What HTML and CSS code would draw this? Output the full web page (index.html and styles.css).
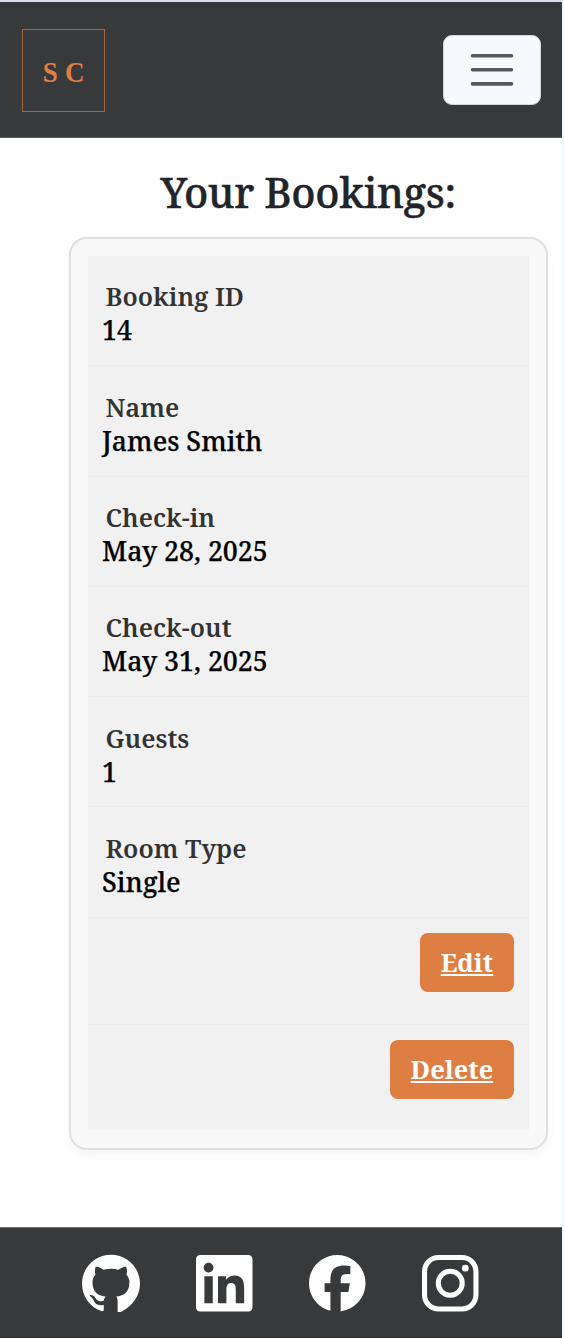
FILE: index.html
```html
<!DOCTYPE html>
<html lang="en">
<head>
<meta charset="utf-8">
<title>Your Bookings</title>
<link rel="stylesheet" href="styles.css">
</head>
<body>
<div class="page">
  <header class="navbar">
    <a class="logo"><span>S</span><span>C</span></a>
    <button class="toggler" aria-label="Menu">
      <svg width="44" height="34" viewBox="0 0 44 34"><path d="M2.5 2.7h39M2.5 16.8h39M2.5 30.9h39" stroke="#57585b" stroke-width="3.6" stroke-linecap="round"/></svg>
    </button>
  </header>
  <main class="content">
    <h1 class="title">Your Bookings:</h1>
    <section class="card">
      <dl class="rows">
        <div class="row"><dt>Booking ID</dt><dd>14</dd></div>
        <div class="row"><dt>Name</dt><dd>James Smith</dd></div>
        <div class="row"><dt>Check-in</dt><dd>May 28, 2025</dd></div>
        <div class="row"><dt>Check-out</dt><dd>May 31, 2025</dd></div>
        <div class="row"><dt>Guests</dt><dd>1</dd></div>
        <div class="row"><dt>Room Type</dt><dd>Single</dd></div>
        <div class="row action"><a class="btn edit">Edit</a></div>
        <div class="row action last"><a class="btn delete">Delete</a></div>
      </dl>
    </section>
  </main>
  <footer class="footer">
    <svg class="icon github" viewBox="0 0 24 24"><path d="M12 .297c-6.63 0-12 5.373-12 12 0 5.303 3.438 9.8 8.205 11.385.6.113.82-.258.82-.577 0-.285-.01-1.04-.015-2.04-3.338.724-4.042-1.61-4.042-1.61C4.422 18.07 3.633 17.7 3.633 17.7c-1.087-.744.084-.729.084-.729 1.205.084 1.838 1.236 1.838 1.236 1.07 1.835 2.809 1.305 3.495.998.108-.776.417-1.305.76-1.605-2.665-.3-5.466-1.332-5.466-5.93 0-1.31.465-2.38 1.235-3.22-.135-.303-.54-1.523.105-3.176 0 0 1.005-.322 3.3 1.23.96-.267 1.98-.399 3-.405 1.02.006 2.04.138 3 .405 2.28-1.552 3.285-1.23 3.285-1.23.645 1.653.24 2.873.12 3.176.765.84 1.23 1.91 1.23 3.22 0 4.61-2.805 5.625-5.475 5.92.42.36.6 1.096.6 2.22v4.1c0 .3.1.5.3.6C20.565 22.092 24 17.592 24 12.297c0-6.627-5.373-12-12-12"/></svg>
    <svg class="icon" viewBox="0 0 24 24"><path d="M20.447 20.452h-3.554v-5.569c0-1.328-.027-3.037-1.852-3.037-1.853 0-2.136 1.445-2.136 2.939v5.667H9.351V9h3.414v1.561h.046c.477-.9 1.637-1.85 3.37-1.85 3.601 0 4.267 2.37 4.267 5.455v6.286zM5.337 7.433c-1.144 0-2.063-.926-2.063-2.065 0-1.138.92-2.063 2.063-2.063 1.14 0 2.064.925 2.064 2.063 0 1.139-.925 2.065-2.064 2.065zm1.782 13.019H3.555V9h3.564v11.452zM22.225 0H1.771C.792 0 0 .774 0 1.729v20.542C0 23.227.792 24 1.771 24h20.451C23.2 24 24 23.227 24 22.271V1.729C24 .774 23.2 0 22.222 0h.003z"/></svg>
    <svg class="icon" viewBox="0 0 24 24"><path d="M9.101 23.691v-7.98H6.627v-3.667h2.474v-1.58c0-4.085 1.848-5.978 5.858-5.978.401 0 .955.042 1.468.103a8.68 8.68 0 0 1 1.141.195v3.325a8.623 8.623 0 0 0-.653-.036 26.805 26.805 0 0 0-.733-.009c-.707 0-1.259.096-1.675.309a1.686 1.686 0 0 0-.679.622c-.258.42-.374.995-.374 1.752v1.297h3.919l-.386 2.103-.287 1.564h-3.246v8.245C19.396 23.238 24 18.179 24 12.044c0-6.627-5.373-12-12-12s-12 5.373-12 12c0 5.628 3.874 10.35 9.101 11.647Z"/></svg>
    <svg class="icon" viewBox="0 0 24 24"><g fill="none" stroke="#fff" stroke-width="2.16"><rect x="1.08" y="1.08" width="21.84" height="21.84" rx="5.9"/><circle cx="12" cy="12" r="5.08"/></g><circle cx="18.41" cy="5.59" r="1.44"/></svg>
  </footer>
</div>
</body>
</html>
```
FILE: styles.css
```css
* { box-sizing: border-box; }
body {
  margin: 0;
  background: #fff;
  font-family: "Noto Serif", "Droid Serif", "DejaVu Serif Condensed", "DejaVu Serif", serif;
}
.page {
  display: flex;
  flex-direction: column;
  height: 1338px;
  border-top: 2px solid #d9dfea;
  border-right: 2px solid #f6f7fd;
}
.navbar {
  height: 136px;
  padding: 0 21px 0 22px;
  display: flex;
  align-items: center;
  justify-content: space-between;
  background: #38393b;
  border-bottom: 1px solid #5d5e62;
}
.logo {
  width: 83px;
  height: 83px;
  margin-top: 2px;
  padding-top: 3px;
  border: 1px solid #a5643f;
  display: flex;
  align-items: center;
  justify-content: center;
  gap: 5px;
  color: #e07f44;
  font: bold 30px/1 "Liberation Serif", serif;
}
.logo span { transform: scaleX(.9); }
.toggler {
  width: 98px;
  height: 70px;
  padding: 0;
  display: flex;
  align-items: center;
  justify-content: center;
  border: 1px solid #d3d5d6;
  border-radius: 9px;
  background: #f8f9fc;
}
.content {
  flex: 1;
  padding: 30px 14px 0 68.5px;
}
.title {
  margin: 0;
  height: 69px;
  line-height: 49px;
  text-align: center;
  color: #212529;
  font-size: 41.5px;
  letter-spacing: -0.4px;
  font-weight: 500;
  -webkit-text-stroke: .4px #212529;
}
.card {
  padding: 17px 17.5px 18px 17.5px;
  border: 2px solid #dedfe0;
  border-radius: 18px;
  background: #f9f9f9;
  box-shadow: 0 4px 10px rgba(0, 0, 0, .05);
  height: 912.5px;
}
.rows { margin: 0; background: #f1f1f1; height: 874px; }
.row {
  height: 110.3px;
  padding: 23.4px 14px 0;
  border-bottom: 1px solid #ececec;
}
.row dt {
  padding-left: 3.5px;
  height: 34px;
  line-height: 34px;
  font-size: 25.5px;
  font-weight: 600;
  color: #333;
}
.row dd {
  margin: 0;
  height: 34px;
  line-height: 34px;
  font-size: 26.7px;
  font-weight: 500;
  color: #000;
  -webkit-text-stroke: .25px #000;
}
.row.action {
  height: 106.8px;
  padding: 15px 14.6px 0 0;
  display: flex;
  align-items: flex-start;
  justify-content: flex-end;
}
.row.last { border-bottom: 0; height: 105px; }
.btn {
  height: 59px;
  display: flex;
  align-items: center;
  justify-content: center;
  border-radius: 8px;
  background: #df7e43;
  color: #fff;
  font-size: 25.5px;
  font-weight: 700;
  text-decoration: underline;
}
.edit { width: 94px; }
.delete { width: 124px; }
.footer {
  height: 111px;
  padding: 2px 0 0 82px;
  display: flex;
  align-items: center;
  gap: 56.4px;
  background: #38393b;
  border-top: 1px solid #6a6b70;
  border-bottom: 1px solid #2d2829;
}
.icon { width: 56.5px; height: 56.5px; fill: #fff; flex: none; }
.github { width: 58px; height: 58px; margin-top: -2px; }
```
